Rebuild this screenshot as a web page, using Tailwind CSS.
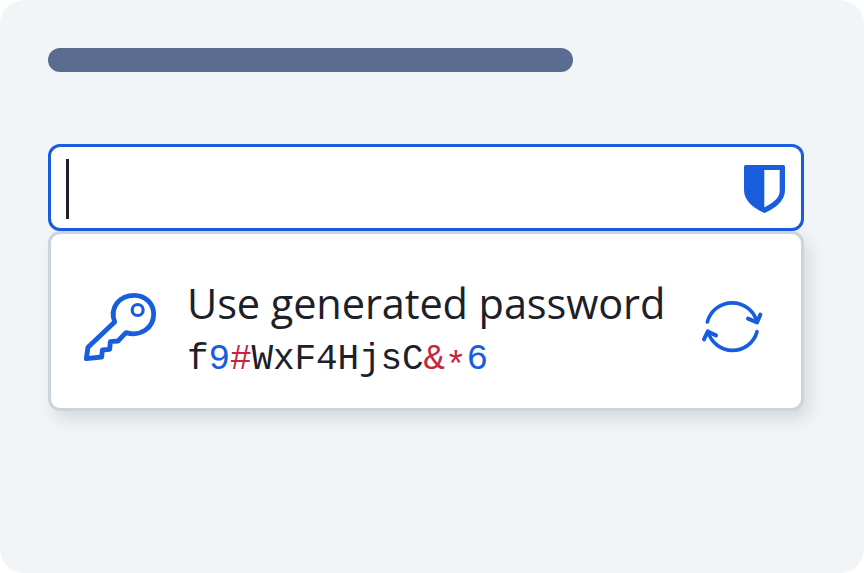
<!DOCTYPE html>
<html lang="en">
<head>
<meta charset="utf-8">
<title>Use generated password</title>
<script src="https://cdn.jsdelivr.net/npm/@tailwindcss/browser@4"></script>
</head>
<body class="bg-white">
<main class="w-[864px] h-[573px] rounded-[24px] bg-[#f1f5f8] px-12 pt-12 overflow-hidden">
  <div class="w-[525px] h-6 rounded-full bg-[#5a6d91]"></div>
  <div class="mt-[72px] w-[756px] h-[87px] rounded-[12px] border-3 border-[#175ddc] bg-white flex items-center justify-between pl-[15px] pr-[16px]">
    <div class="w-[3px] h-[60px] mt-[2px] bg-[#1b2029]"></div>
    <svg class="w-[41px] h-[48px] mt-[2px]" viewBox="0 0 123 144" fill="#175ddc"><path fill-rule="evenodd" d="M5 0H118Q123 0 123 5V76C123 108 93 131 61.500 144C30 131 0 108 0 76V5Q0 0 5 0ZM61 15V127C86 115 107 99 107 79V15Z"/></svg>
  </div>
  <div class="w-[756px] h-[180px] rounded-[12px] border-3 border-[#cbd3dc] bg-white flex items-start shadow-[6px_9px_18px_rgba(0,0,0,0.11)]">
    <svg class="w-[100px] h-[95px] ml-[19px] mt-[46px] shrink-0" viewBox="0 0 300 285" fill="none" stroke="#175ddc" stroke-width="14.500" stroke-linejoin="round"><path d="M134 126C118 83 148 46 193 46C226 46 251 71 251 103C251 143 212 171 168 158L144 183L121 185L119 208L97 210L95 231L49 236L54 202Z"/><circle cx="203" cy="90" r="16.500" stroke-width="9.500"/></svg>
    <div class="ml-[17px] mt-[41px] w-[490px] flex flex-col whitespace-nowrap text-[#1b2029]">
      <div class="font-['Open_Sans',sans-serif] text-[41.500px] leading-[56px] tracking-[-0.1px]">Use generated password</div>
      <div class="mt-[5px] h-12 font-['Liberation_Mono',monospace] text-[36px] leading-[48px] tracking-[-0.1px]">f<span class="text-[#175ddc]">9</span><span class="text-[#c8253b]">#</span>WxF4HjsC<span class="text-[#c8253b]">&amp;<span class="relative top-[8px]">*</span></span><span class="text-[#175ddc]">6</span></div>
    </div>
    <svg class="w-[90px] h-[80px] ml-[13px] mt-[51px] shrink-0" viewBox="0 0 270 240" fill="none" stroke="#175ddc" stroke-width="11" stroke-linecap="round" stroke-linejoin="round"><path d="M52 111A77 77 0 0 1 201 111M201 140A76 76 0 0 1 54 139"/><path d="M174 101L201 112L211 89M42 163L53 140L78 151" stroke-width="12"/></svg>
  </div>
</main>
</body>
</html>
